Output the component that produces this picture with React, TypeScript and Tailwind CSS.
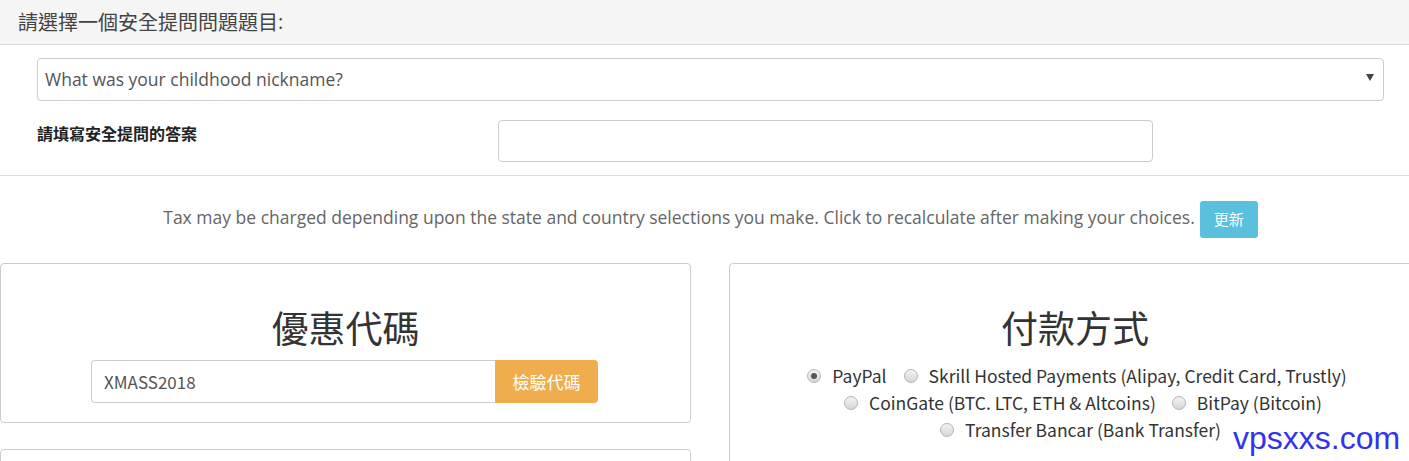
import React from 'react';

const cjk = "font-['Noto_Sans_CJK_TC','Noto_Sans',sans-serif]";
const sans = "font-['Open_Sans','Noto_Sans_CJK_TC',sans-serif]";

const Radio = ({ checked }: { checked?: boolean }) => (
  <span className="inline-flex h-[14px] w-[14px] shrink-0 items-center justify-center rounded-full border border-[#b5b5b5] bg-[linear-gradient(#f4f4f4,#d6d6d6)]">
    {checked && <span className="h-[6px] w-[6px] rounded-full bg-[#555]" />}
  </span>
);

const Option = ({ label, checked }: { label: string; checked?: boolean }) => (
  <label className="flex items-center gap-[11px]">
    <Radio checked={checked} />
    <span>{label}</span>
  </label>
);

export default function App() {
  return (
    <div className={`relative w-[1409px] h-[461px] overflow-hidden bg-white text-[#333] ${sans}`}>
      {/* Security question header */}
      <div className={`h-[45px] flex items-center px-[18px] bg-[#f5f5f5] border-b border-[#ddd] text-[20px] text-[#444] ${cjk}`}>
        請選擇一個安全提問問題題目<span className={sans}>:</span>
      </div>

      <div className="px-[37px] pt-[13px] pb-[13px] border-b border-[#ddd]">
        <div className="relative flex items-center h-[43px] w-[1347px] rounded-[4px] border border-[#ccc] px-[7px] text-[17.5px] text-[#555]">
          What was your childhood nickname?
          <span className="absolute right-[9px] top-[15px] h-0 w-0 border-x-[4px] border-t-[7px] border-x-transparent border-t-[#444]" />
        </div>
        <div className="mt-[19px] flex items-start">
          <div className={`w-[461px] pt-[1px] text-[16px] font-bold text-[#222] ${cjk}`}>請填寫安全提問的答案</div>
          <div className="h-[42px] w-[655px] rounded-[4px] border border-[#ccc]" />
        </div>
      </div>

      {/* Tax notice */}
      <div className="mt-[25px] flex items-center justify-center gap-[5px] pl-[12px]">
        <span className="pb-[5px] text-[17.5px] leading-[24px] text-[#666]">
          Tax may be charged depending upon the state and country selections you make. Click to recalculate after making your choices.
        </span>
        <button className={`h-[37px] w-[58px] rounded-[3px] bg-[#5bc0de] text-[15px] text-white ${cjk}`}>更新</button>
      </div>

      {/* Cards */}
      <div className="mt-[25px] flex gap-[38px]">
        <div className="flex w-[691px] shrink-0 flex-col gap-[26px]">
          <div className="flex h-[160px] flex-col items-center rounded-[4px] border border-[#ccc] pt-[42px]">
            <h2 className={`text-[37px] leading-[42px] text-[#333] ${cjk}`}>優惠代碼</h2>
            <div className="mt-[12px] flex h-[43px] w-[507px] -translate-x-[1px]">
              <div className={`flex flex-1 items-center rounded-l-[4px] border border-r-0 border-[#ccc] px-[12px] text-[17px] text-[#555] ${cjk}`}>
                XMASS2018
              </div>
              <button className={`w-[103px] rounded-r-[4px] bg-[#f0ad4e] text-[17px] text-white ${cjk}`}>檢驗代碼</button>
            </div>
          </div>
          <div className="h-[60px] rounded-[4px] border border-[#ccc]" />
        </div>

        <div className="flex h-[260px] w-[692px] shrink-0 flex-col items-center rounded-[4px] border border-[#ccc] pt-[42px]">
          <h2 className={`text-[37px] leading-[42px] text-[#333] ${cjk}`}>付款方式</h2>
          <div className={`mt-[14px] flex flex-col items-center text-[17.5px] leading-[27px] text-[#333] ${cjk}`}>
            <div className="flex items-center gap-[17px] pl-[4px]">
              <Option label="PayPal" checked />
              <Option label="Skrill Hosted Payments (Alipay, Credit Card, Trustly)" />
            </div>
            <div className="flex items-center gap-[16px] pl-[16px]">
              <Option label="CoinGate (BTC. LTC, ETH & Altcoins)" />
              <Option label="BitPay (Bitcoin)" />
            </div>
            <div className="flex items-center pl-[11px]">
              <Option label="Transfer Bancar (Bank Transfer)" />
            </div>
          </div>
        </div>
      </div>

      {/* Watermark */}
      <div className="absolute left-[1233px] top-[418px] font-['Liberation_Sans',sans-serif] text-[32px] leading-[40px] text-[#3333ee]">
        vpsxxs.com
      </div>
    </div>
  );
}
